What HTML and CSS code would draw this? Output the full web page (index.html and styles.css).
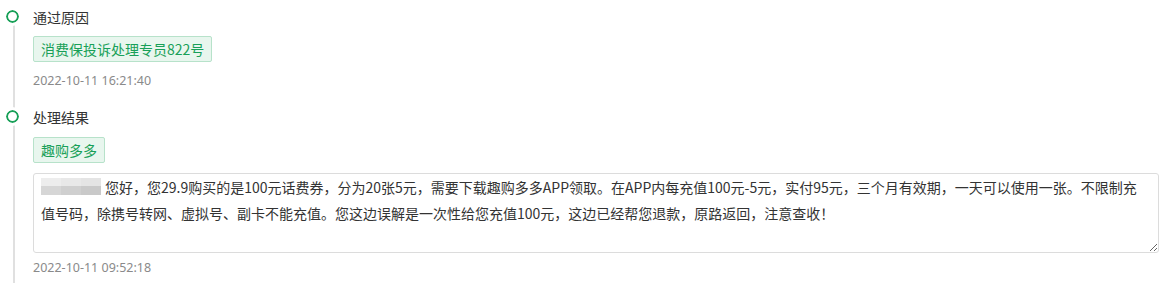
FILE: index.html
```html
<!DOCTYPE html>
<html lang="zh-CN">

<head>
  <meta charset="UTF-8" />
  <meta name="viewport" content="width=device-width, initial-scale=1.0" />
  <title>处理记录</title>
  <link rel="stylesheet" href="styles.css">
</head>

<body>
  <div class="timeline">
    <div class="item">
      <span class="dot"></span>
      <div class="title">通过原因</div>
      <div class="tag">消费保投诉处理专员822号</div>
      <div class="time">2022-10-11 16:21:40</div>
    </div>

    <div class="item">
      <span class="dot"></span>
      <div class="title">处理结果</div>
      <div class="tag">趣购多多</div>
      <div class="reply">
        <span class="mask">
          <i></i><i></i><i></i><i></i><i></i><i></i>
        </span>
        <textarea readonly>您好，您29.9购买的是100元话费券，分为20张5元，需要下载趣购多多APP领取。在APP内每充值100元-5元，实付95元，三个月有效期，一天可以使用一张。不限制充值号码，除携号转网、虚拟号、副卡不能充值。您这边误解是一次性给您充值100元，这边已经帮您退款，原路返回，注意查收！</textarea>
      </div>
      <div class="time">2022-10-11 09:52:18</div>
    </div>
  </div>
</body>

</html>
```

FILE: styles.css
```css
:root {
  --green: #18a058;
  --tag-bg: #e8f6ee;
  --tag-border: #b7e2ca;
  --line: #e0e0e0;
  --text: #333;
  --muted: #8a8a8a;
}

body {
  margin: 0;
  font-family: "Noto Sans CJK SC", "Noto Sans", sans-serif;
  color: var(--text);
  background: #fff;
}

.timeline {
  position: relative;
  padding: 7px 12px 6px 33px;
}

.timeline::before {
  content: "";
  position: absolute;
  left: 13px;
  top: 24px;
  bottom: 0;
  width: 2px;
  background: var(--line);
}

.item {
  position: relative;
}

.item + .item {
  margin-top: 17px;
}

.dot {
  position: absolute;
  left: -27px;
  top: 3px;
  width: 9px;
  height: 9px;
  border: 2px solid var(--green);
  border-radius: 50%;
  background: #fff;
  z-index: 1;
  outline: 3px solid #fff;
}

.title {
  font-size: 14px;
  line-height: 20px;
}

.tag {
  display: inline-block;
  margin-top: 9px;
  padding: 0 7px;
  height: 24px;
  line-height: 24px;
  font-size: 14px;
  color: var(--green);
  background: var(--tag-bg);
  border: 1px solid var(--tag-border);
  border-radius: 2px;
}

.item + .item .tag {
  margin-top: 10px;
}

.time {
  margin-top: 10px;
  font-family: "Noto Sans", sans-serif;
  font-size: 12.5px;
  line-height: 18px;
  color: var(--muted);
}

.reply {
  position: relative;
  margin-top: 10px;
}

.reply textarea {
  display: block;
  box-sizing: border-box;
  width: 100%;
  height: 80px;
  margin: 0;
  padding: 0 8px 0 7px;
  font-family: "Noto Sans CJK SC", "Noto Sans", sans-serif;
  font-size: 14px;
  line-height: 26px;
  color: var(--text);
  text-indent: 64px;
  border: 1px solid #dcdcdc;
  border-radius: 3px;
  resize: vertical;
  outline: none;
}

.reply + .time {
  margin-top: 6px;
}

.mask {
  position: absolute;
  left: 8px;
  top: 5px;
  display: grid;
  grid-template-columns: repeat(3, 20px);
  grid-template-rows: 8px 9px;
}

.mask i:nth-child(1) { background: #ededed; }
.mask i:nth-child(2) { background: #e8e8e8; }
.mask i:nth-child(3) { background: #e4e4e4; }
.mask i:nth-child(4) { background: #d6d6d6; }
.mask i:nth-child(5) { background: #cfcfcf; }
.mask i:nth-child(6) { background: #c9c9c9; }
```
